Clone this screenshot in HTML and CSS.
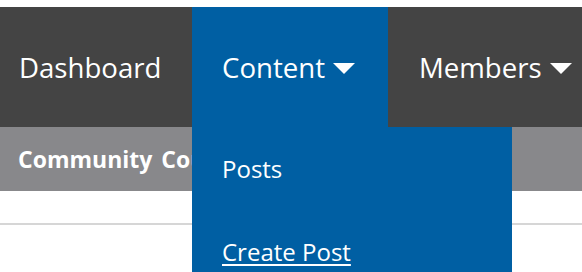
FILE: index.html
```html
<!DOCTYPE html>
<html lang="en">
<head>
  <meta charset="UTF-8">
  <title>Community Admin</title>
  <link rel="stylesheet" href="styles.css">
</head>
<body>
  <nav class="topnav">
    <div class="nav-item first">Dashboard</div>
    <div class="nav-item open">
      Content <span class="caret"></span>
      <ul class="dropdown">
        <li><a href="#" class="plain">Posts</a></li>
        <li><a href="#" class="link">Create Post</a></li>
      </ul>
    </div>
    <div class="nav-item">Members <span class="caret"></span></div>
  </nav>

  <div class="subbar">Community Council</div>

  <div class="spacer"></div>
  <div class="rule"></div>
</body>
</html>
```

FILE: styles.css
```css
html {
  height: 100%;
}

body {
  margin: 0;
  padding-top: 7px;
  box-sizing: border-box;
  min-height: 100%;
  background: #fff;
  font-family: "Open Sans", "Noto Sans", sans-serif;
  color: white;
}

.topnav {
  display: flex;
  background: #444444;
  height: 120px;
  position: relative;
  z-index: 2;
}

.nav-item {
  position: relative;
  flex-shrink: 0;
  display: flex;
  align-items: center;
  gap: 8px;
  height: 120px;
  padding: 0 32px 0 31px;
  font-size: 27.6px;
  white-space: nowrap;
}

.nav-item.first {
  width: 192px;
  box-sizing: border-box;
  padding: 0 0 0 19px;
}

.nav-item.open {
  width: 196px;
  box-sizing: border-box;
  padding-left: 30px;
  background: #005fa3;
}

.caret {
  display: inline-block;
  width: 0;
  height: 0;
  border-left: 11px solid transparent;
  border-right: 11px solid transparent;
  border-top: 11px solid white;
  margin-top: 3px;
}

.dropdown {
  position: absolute;
  left: 0;
  top: 120px;
  width: 320px;
  height: 145px;
  margin: 0;
  padding: 0;
  list-style: none;
  background: #005fa3;
}

.dropdown li {
  font-size: 24px;
  padding-left: 30px;
  line-height: 30px;
}

.dropdown li:first-child {
  padding-top: 27px;
}

.dropdown li:nth-child(2) {
  padding-top: 53px;
}

.dropdown a {
  color: white;
  text-decoration: none;
}

.dropdown a.link {
  text-decoration: underline;
  text-underline-offset: 3px;
}

.subbar {
  background: #88888b;
  height: 64px;
  line-height: 64px;
  padding-left: 18px;
  font-size: 23px;
  font-weight: bold;
  word-spacing: 3px;
  white-space: nowrap;
}

.spacer {
  height: 32px;
}

.rule {
  border-top: 2px solid #d6d6d6;
}
```
